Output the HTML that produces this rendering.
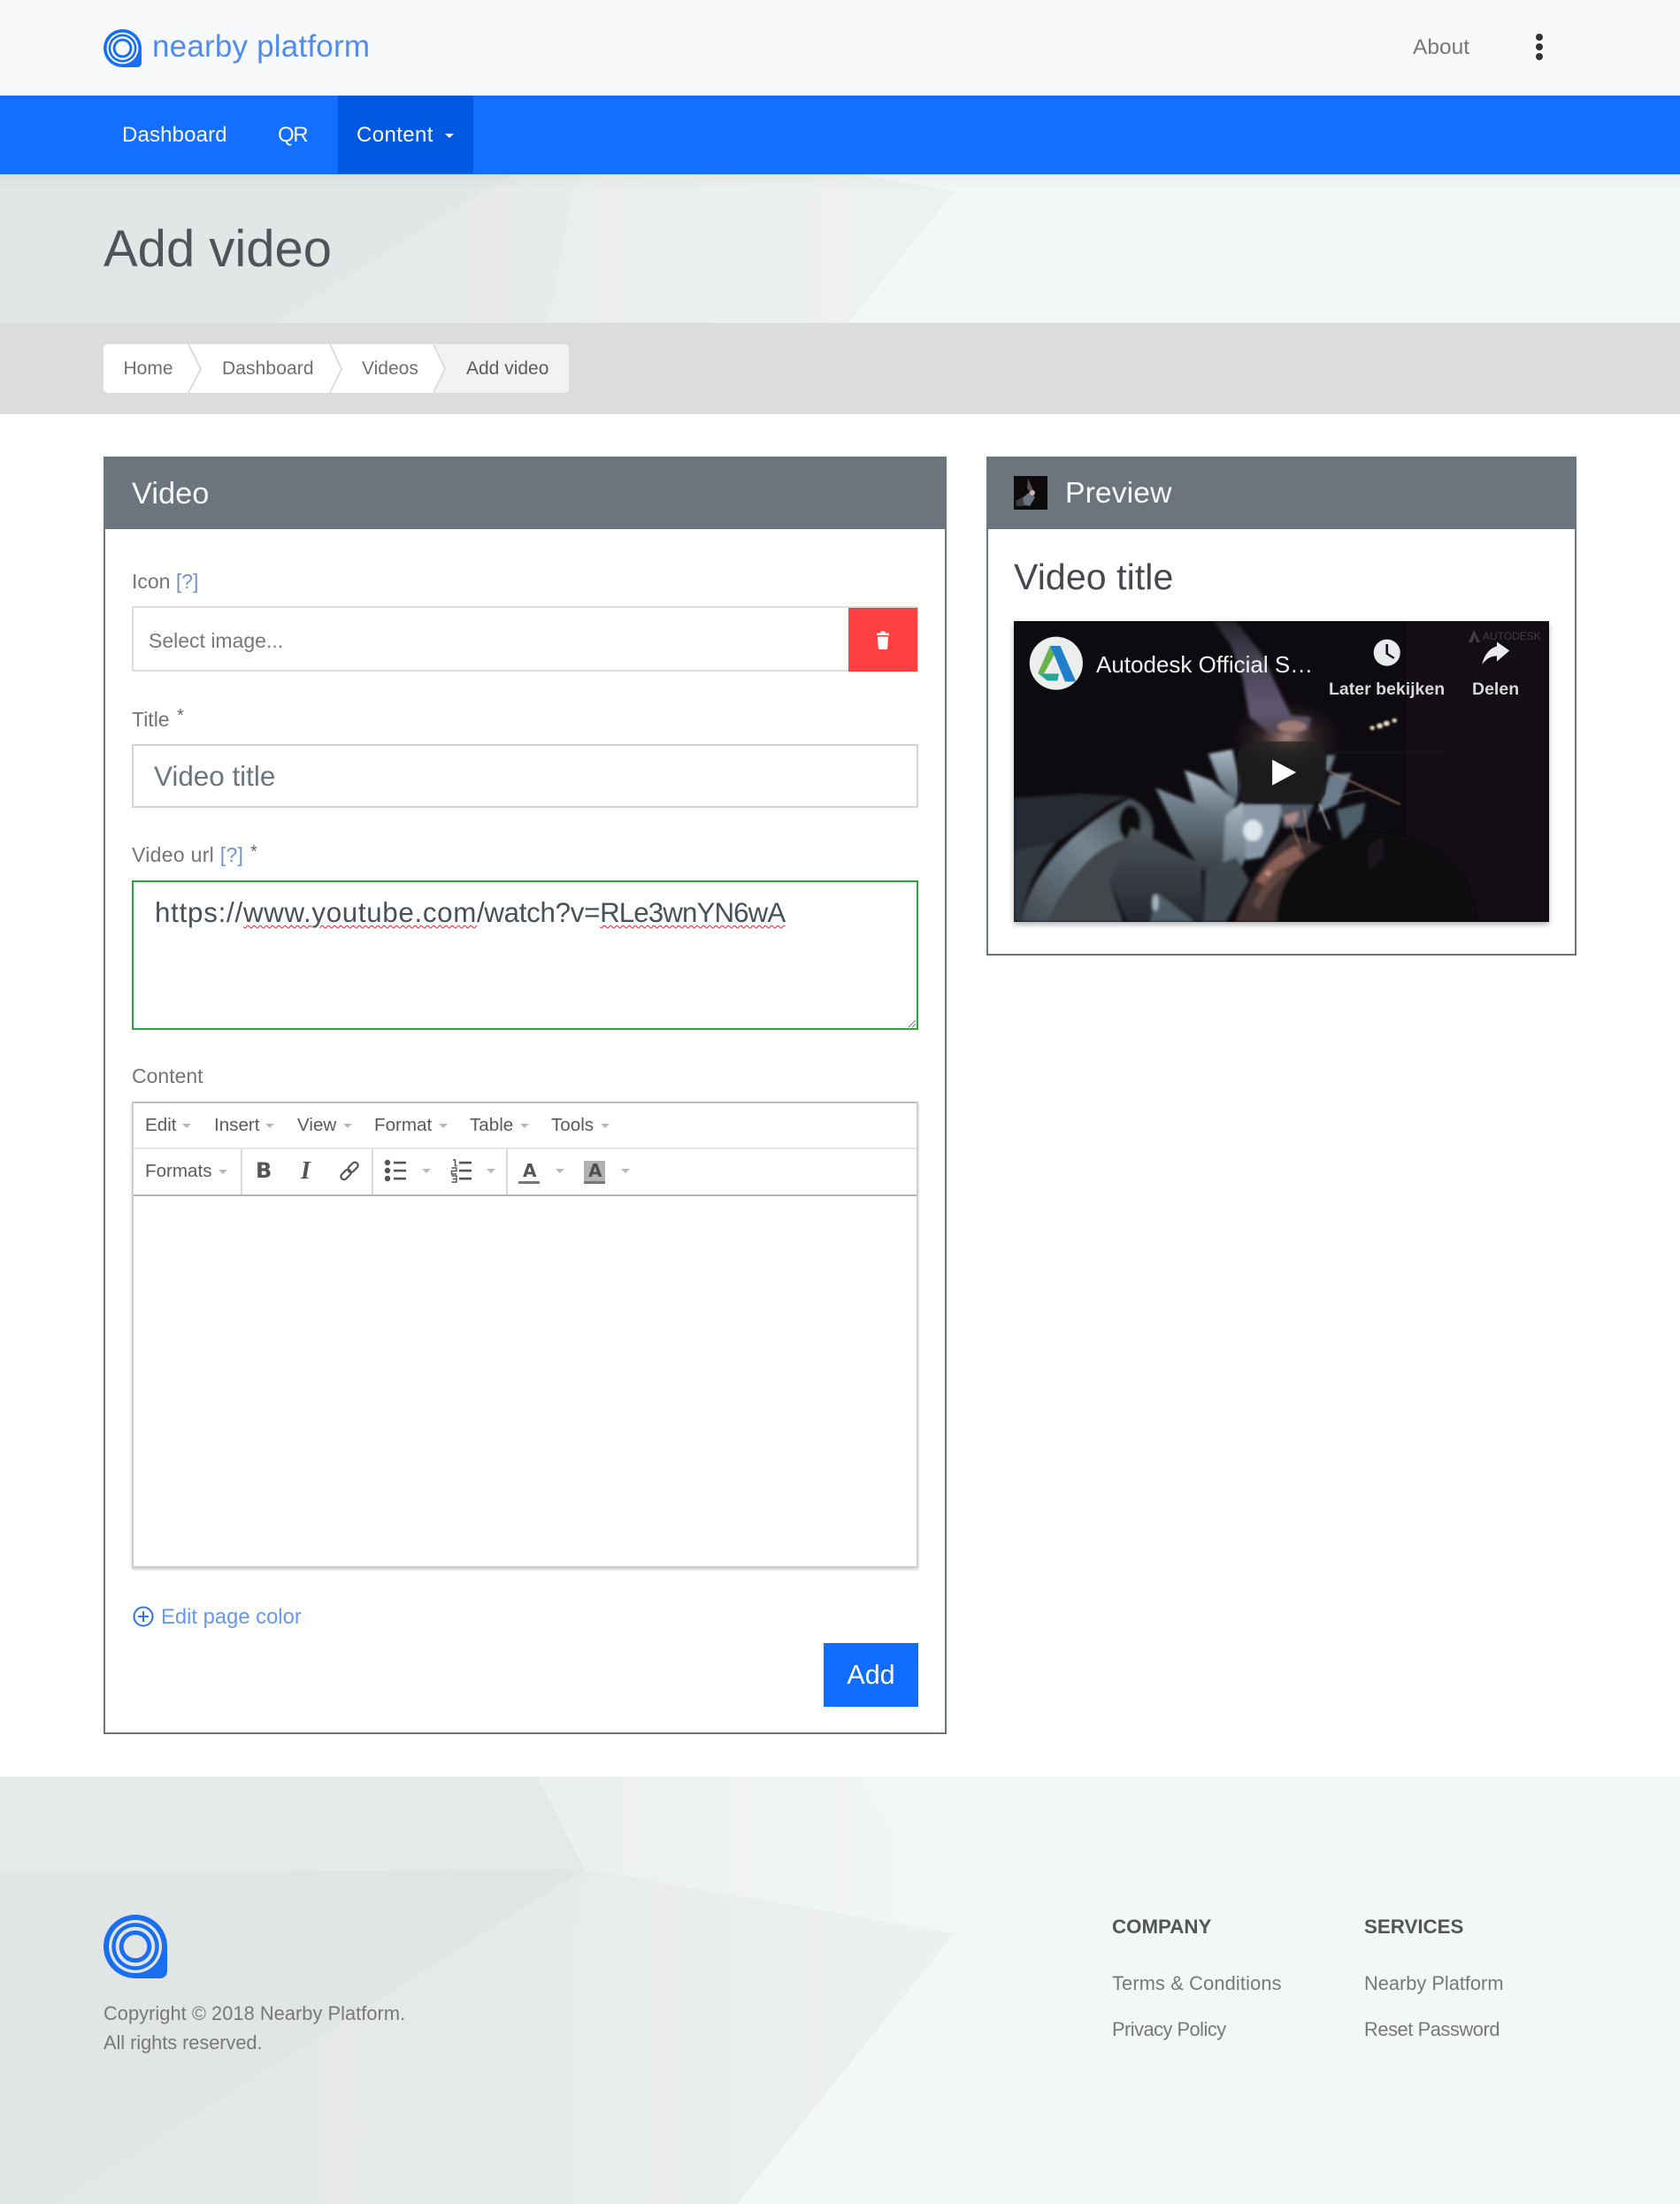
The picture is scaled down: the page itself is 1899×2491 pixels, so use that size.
<!DOCTYPE html>
<html lang="en"><head><meta charset="utf-8"><title>Add video</title>
<style>
html,body{margin:0;padding:0;background:#fff}
#p{position:relative;width:1899px;height:2491px;overflow:hidden;font-family:"Liberation Sans",Arial,sans-serif;color:#666;background:#fff}
.a{position:absolute}
.t{position:absolute;white-space:nowrap;line-height:1}
.l{font-size:23px;color:#747474}
.b{color:#6e96cc}
.m{font-size:20.6px;color:#5a5a5a}
.f{font-size:21.8px;color:#787878}
.fh{font-size:22.3px;font-weight:bold;color:#555}
.c{position:absolute;width:0;height:0;border-left:5px solid transparent;border-right:5px solid transparent;border-top:5px solid #b8b8b8}
.n{font-size:24px;color:#f4f8ff}
.w{text-decoration:underline wavy #e0242c 1px;text-underline-offset:3px}
svg{display:block}
</style></head><body><div id="p">

<!-- header -->
<div class="a" style="left:0;top:0;width:1899px;height:108px;background:#f7f9fb"></div>
<svg class="a" style="left:117px;top:33px" width="43" height="43" viewBox="0 0 72 72"><path d="M36 0A36 36 0 0 0 36 72H64A8 8 0 0 0 72 64V36A36 36 0 0 0 36 0Z" fill="#1a6ff0"/><circle cx="36" cy="36" r="30" fill="#f7f9fb"/><circle cx="36" cy="36" r="26.7" fill="#1a6ff0"/><circle cx="36" cy="36" r="22.3" fill="#f7f9fb"/><circle cx="36" cy="36" r="18.3" fill="#1a6ff0"/><circle cx="36" cy="36" r="13.3" fill="#f7f9fb"/></svg>
<div class="t" style="left:172px;top:35px;font-size:35px;color:#4f8cf0;letter-spacing:.2px">nearby platform</div>
<div class="t" style="left:1597px;top:42px;font-size:24.5px;color:#777">About</div>
<div class="a" style="left:1736px;top:38px;width:8px;height:8px;border-radius:50%;background:#333"></div>
<div class="a" style="left:1736px;top:49px;width:8px;height:8px;border-radius:50%;background:#333"></div>
<div class="a" style="left:1736px;top:60px;width:8px;height:8px;border-radius:50%;background:#333"></div>

<!-- nav -->
<div class="a" style="left:0;top:108px;width:1899px;height:89px;background:#146eff"></div>
<div class="a" style="left:382px;top:108px;width:153px;height:88px;background:#0058e0"></div>
<div class="t n" style="left:138px;top:141px;letter-spacing:.15px">Dashboard</div>
<div class="t n" style="left:314px;top:141px;letter-spacing:-1.4px">QR</div>
<div class="t n" style="left:403px;top:141px;letter-spacing:.4px">Content</div>
<div class="c" style="left:503px;top:151px;border-top-color:#fff"></div>

<!-- hero -->
<svg class="a" style="left:0;top:197px" width="1899" height="168" viewBox="0 2166 1899 168" preserveAspectRatio="none">
<defs>
<linearGradient id="hm" gradientUnits="userSpaceOnUse" x1="620" y1="0" x2="1000" y2="0"><stop offset="0" stop-color="#ebeeef"/><stop offset="1" stop-color="#eef1f2"/></linearGradient>
<linearGradient id="hl" gradientUnits="userSpaceOnUse" x1="100" y1="0" x2="640" y2="0"><stop offset="0" stop-color="#e5e8e9"/><stop offset="1" stop-color="#e8ebec"/></linearGradient>
</defs>
<rect x="0" y="2008" width="1899" height="483" fill="#f4f7f8"/>
<polygon points="661,2113 1079,2185 833,2491 591,2491" fill="url(#hm)"/>
<polygon points="0,2115 661,2113 63,2491 0,2491" fill="#e3e6e7"/>
<polygon points="661,2113 591,2491 63,2491" fill="url(#hl)"/>
</svg>
<div class="a" style="left:0;top:197px;width:1899px;height:18px;background:linear-gradient(rgba(0,0,0,.035),rgba(0,0,0,0))"></div>
<div class="t" style="left:117px;top:253px;font-size:58px;color:#50545a">Add video</div>

<!-- breadcrumb -->
<div class="a" style="left:0;top:365px;width:1899px;height:103px;background:#dcdcdc"></div>
<svg class="a" style="left:117px;top:389px" width="526" height="55" viewBox="117 389 526 55">
<rect x="117" y="389" width="526" height="55" rx="5" fill="#fff"/>
<path d="M490 389H638A5 5 0 0 1 643 394V439A5 5 0 0 1 638 444H490L503 417Z" fill="#f0f2f3"/>
<path d="M213 389L227 417L213 444M373 389L386 417L373 444M490 389L503 417L490 444" fill="none" stroke="#dcdcdc" stroke-width="2"/>
</svg>
<div class="t" style="left:139.5px;top:406px;font-size:21px;color:#6e6e6e">Home</div>
<div class="t" style="left:251px;top:406px;font-size:21px;color:#6e6e6e;letter-spacing:.1px">Dashboard</div>
<div class="t" style="left:409px;top:406px;font-size:21px;color:#6e6e6e">Videos</div>
<div class="t" style="left:527px;top:406px;font-size:21px;color:#5c5c5c">Add video</div>

<!-- video panel -->
<div class="a" style="left:117px;top:516px;width:949px;height:1440px;border:2px solid #6c757d"></div>
<div class="a" style="left:117px;top:516px;width:953px;height:82px;background:#6c757d"></div>
<div class="t" style="left:149px;top:541px;font-size:34.4px;color:#f6f7f8">Video</div>

<div class="t l" style="left:149px;top:646px">Icon <span class="b">[?]</span></div>
<div class="a" style="left:149px;top:685px;width:885px;height:70px;border:2px solid #dedede"></div>
<div class="a" style="left:959px;top:687px;width:78px;height:72px;background:#ff4040"></div>
<svg class="a" style="left:988px;top:711px" width="20" height="24" viewBox="0 0 20 24"><path d="M3 4.5H7.5V2.5H12.5V4.5H17V7H3Z M4 8.5H16L15.2 21.5A1.8 1.8 0 0 1 13.4 23H6.6A1.8 1.8 0 0 1 4.8 21.5Z" fill="#fff"/></svg>
<div class="t" style="left:168px;top:713px;font-size:23px;color:#787878">Select image...</div>

<div class="t l" style="left:149px;top:802px">Title</div>
<div class="t" style="left:200px;top:799px;font-size:20px;color:#666">*</div>
<div class="a" style="left:149px;top:841px;width:885px;height:68px;border:2px solid #d4d4d4"></div>
<div class="t" style="left:174px;top:862px;font-size:31.4px;color:#6c757d">Video title</div>

<div class="t l" style="left:149px;top:955px;letter-spacing:.3px">Video url <span class="b">[?]</span></div>
<div class="t" style="left:283px;top:953px;font-size:20px;color:#666">*</div>
<div class="a" style="left:149px;top:995px;width:885px;height:165px;border:2px solid #28a745"></div>
<div class="t" style="left:175px;top:1016px;font-size:31.3px;color:#495057"><span style="letter-spacing:.75px">https://</span><span class="w" style="letter-spacing:.67px">www.youtube.com</span><span style="letter-spacing:-.3px">/watch?v=</span><span class="w" style="letter-spacing:-.9px">RLe3wnYN6wA</span></div>
<svg class="a" style="left:1026px;top:1152px" width="10" height="10"><path d="M1 9L9 1M5 9L9 5" stroke="#777" stroke-width="1"/></svg>

<div class="t l" style="left:149px;top:1205px">Content</div>

<!-- editor -->
<div class="a" style="left:149px;top:1245px;width:885px;height:523px;background:#fff;border:2px solid #cfcfcf;border-top-color:#bdbdbd;box-shadow:0 2px 3px rgba(0,0,0,.2)"></div>
<div class="a" style="left:151px;top:1297px;width:885px;height:2px;background:#e6e6e6"></div>
<div class="a" style="left:151px;top:1350px;width:885px;height:2px;background:#b5b5b5"></div>
<div class="a" style="left:272px;top:1299px;width:2px;height:51px;background:#d8d8d8"></div>
<div class="a" style="left:420px;top:1299px;width:2px;height:51px;background:#d8d8d8"></div>
<div class="a" style="left:572px;top:1299px;width:2px;height:51px;background:#d8d8d8"></div>

<div class="t m" style="left:164px;top:1262px">Edit</div><div class="c" style="left:206px;top:1270px"></div>
<div class="t m" style="left:242px;top:1262px">Insert</div><div class="c" style="left:300px;top:1270px"></div>
<div class="t m" style="left:336px;top:1262px">View</div><div class="c" style="left:388px;top:1270px"></div>
<div class="t m" style="left:423px;top:1262px">Format</div><div class="c" style="left:496px;top:1270px"></div>
<div class="t m" style="left:531px;top:1262px">Table</div><div class="c" style="left:588px;top:1270px"></div>
<div class="t m" style="left:623px;top:1262px">Tools</div><div class="c" style="left:679px;top:1270px"></div>

<div class="t m" style="left:164px;top:1314px">Formats</div><div class="c" style="left:247px;top:1322px"></div>
<div class="t" style="left:289px;top:1311px;font-family:'DejaVu Sans',sans-serif;font-weight:bold;font-size:24px;color:#555">B</div>
<div class="t" style="left:340px;top:1310px;font-family:'Liberation Serif',serif;font-weight:bold;font-style:italic;font-size:28px;color:#555">I</div>
<svg class="a" style="left:382px;top:1311px" width="26" height="25" viewBox="0 0 26 25" fill="none" stroke="#555" stroke-width="2.2"><rect x="13.5" y="1.8" width="7" height="13" rx="3.4" transform="rotate(45 17 8.3)"/><rect x="5.5" y="10" width="7" height="13" rx="3.4" transform="rotate(45 9 16.5)"/></svg>

<svg class="a" style="left:434px;top:1310px" width="28" height="28" fill="#555"><circle cx="4" cy="4" r="3.2"/><circle cx="4" cy="13" r="3.2"/><circle cx="4" cy="22" r="3.2"/><rect x="11" y="2.8" width="14" height="2.6"/><rect x="11" y="11.8" width="14" height="2.6"/><rect x="11" y="20.8" width="14" height="2.6"/></svg>
<div class="c" style="left:477px;top:1321px"></div>
<svg class="a" style="left:508px;top:1310px" width="28" height="28" fill="#555"><rect x="11" y="2.8" width="14" height="2.6"/><rect x="11" y="11.8" width="14" height="2.6"/><rect x="11" y="20.8" width="14" height="2.6"/><path d="M4 1H6.5V7.5H8.5" fill="none" stroke="#555" stroke-width="1.5"/><path d="M2.5 10H8V13.5H2.5V17H8" fill="none" stroke="#555" stroke-width="1.4"/><path d="M2.5 19H8V26H2.5M3.5 22.5H8" fill="none" stroke="#555" stroke-width="1.4"/></svg>
<div class="c" style="left:550px;top:1321px"></div>
<div class="t" style="left:591px;top:1313px;font-family:'DejaVu Sans',sans-serif;font-weight:bold;font-size:20px;color:#555">A</div>
<div class="a" style="left:586px;top:1335px;width:24px;height:3px;background:#777"></div>
<div class="c" style="left:628px;top:1321px"></div>
<div class="a" style="left:660px;top:1312px;width:24px;height:25px;background:#b2b2b6"></div>
<div class="t" style="left:665px;top:1313px;font-family:'DejaVu Sans',sans-serif;font-weight:bold;font-size:20px;color:#505050">A</div>
<div class="a" style="left:660px;top:1335px;width:24px;height:3px;background:#777"></div>
<div class="c" style="left:702px;top:1321px"></div>

<svg class="a" style="left:150px;top:1815px" width="24" height="24" viewBox="0 0 24 24" fill="none" stroke="#2f72e8" stroke-width="2"><circle cx="12" cy="12" r="10.5"/><path d="M12 6V18M6 12H18"/></svg>
<div class="t" style="left:182px;top:1816px;font-size:23.8px;color:#6698ef">Edit page color</div>
<div class="a" style="left:931px;top:1857px;width:107px;height:72px;background:#116dff"></div>
<div class="t" style="left:931px;width:107px;text-align:center;top:1878px;font-size:30.5px;color:#fff">Add</div>

<!-- preview panel -->
<div class="a" style="left:1115px;top:516px;width:663px;height:560px;border:2px solid #6c757d"></div>
<div class="a" style="left:1115px;top:516px;width:667px;height:82px;background:#6c757d"></div>
<svg class="a" style="left:1146px;top:538px" width="38" height="38" viewBox="0 0 38 38"><rect width="38" height="38" fill="#0c0a0d"/><path d="M16 3L22 16L20 22L15 13Z" fill="#5f4f5a"/><path d="M8 26L18 18L24 24L18 34L8 32Z" fill="#6a727d"/><circle cx="21" cy="19" r="3" fill="#c9b6b2"/><path d="M2 28L10 24L12 34L3 34Z" fill="#3c4046"/></svg>
<div class="t" style="left:1204px;top:541px;font-size:33.7px;color:#f6f7f8;letter-spacing:.1px">Preview</div>
<div class="t" style="left:1146px;top:632px;font-size:41px;color:#45494f;letter-spacing:.1px">Video title</div>

<!-- video thumb -->
<div class="a" style="left:1146px;top:702px;width:605px;height:340px;box-shadow:0 3px 6px rgba(0,0,0,.3);background:#0e0b10;overflow:hidden">
<svg width="605" height="340" viewBox="0 0 1568 1020" preserveAspectRatio="none">
<defs>
<filter id="bl" x="-5%" y="-5%" width="110%" height="110%"><feGaussianBlur stdDeviation="4.5"/></filter>
<filter id="bl2" x="-30%" y="-30%" width="160%" height="160%"><feGaussianBlur stdDeviation="3"/></filter>
<linearGradient id="nz" x1="0" y1="0" x2="0" y2="1"><stop offset="0" stop-color="#25232a"/><stop offset=".4" stop-color="#4a4558"/><stop offset=".8" stop-color="#5e5670"/><stop offset="1" stop-color="#504650"/></linearGradient>
<radialGradient id="gl"><stop offset="0" stop-color="#e0b4a8" stop-opacity=".75"/><stop offset=".45" stop-color="#80605f" stop-opacity=".3"/><stop offset="1" stop-color="#3a2c34" stop-opacity="0"/></radialGradient>
<linearGradient id="rg" x1="0" y1="1" x2="1" y2="0"><stop offset="0" stop-color="#3f474e"/><stop offset=".55" stop-color="#74848f"/><stop offset="1" stop-color="#3a4047"/></linearGradient>
<linearGradient id="bd" x1="0" y1="0" x2="0" y2="1"><stop offset="0" stop-color="#7c8d9a"/><stop offset="1" stop-color="#2c3237"/></linearGradient>
<linearGradient id="bd2" x1="0" y1="0" x2="0" y2="1"><stop offset="0" stop-color="#4c545c"/><stop offset="1" stop-color="#24282c"/></linearGradient>
<linearGradient id="bd3" x1="0" y1="0" x2="0" y2="1"><stop offset="0" stop-color="#a8b8c4"/><stop offset="1" stop-color="#4a5862"/></linearGradient>
</defs>
<rect width="1568" height="1020" fill="#0e0b10"/>
<rect x="1150" y="0" width="418" height="1020" fill="#120e14"/>
<g filter="url(#bl)">
<ellipse cx="800" cy="395" rx="170" ry="130" fill="url(#gl)"/>
<polygon points="585,0 650,0 725,110 812,320 870,325 866,368 840,380 750,380 690,325 670,190 635,80" fill="url(#nz)"/>
<ellipse cx="815" cy="358" rx="42" ry="20" fill="#a07a74"/>
<!-- left ring -->
<polygon points="0,600 200,585 340,595 280,620 200,690 140,740 0,780" fill="#262b30"/>
<path d="M340,600 Q425,640 405,745 Q200,740 100,1020 L20,1020 Q60,780 340,600Z" fill="url(#rg)"/>
<path d="M345,735 Q200,760 100,1020 L320,1020 L280,880Z" fill="#43474c"/>
<path d="M0,780 L130,745 Q40,860 20,1020 L0,1020Z" fill="#33393f"/>
<ellipse cx="340" cy="685" rx="32" ry="60" fill="#0c0a0e"/>
<!-- blades -->
<polygon points="570,450 640,435 665,560 650,620 600,540" fill="url(#bd3)"/>
<polygon points="500,505 580,540 650,610 625,720 540,650" fill="url(#bd3)"/>
<polygon points="415,565 620,660 645,800 610,890 540,830 480,720" fill="url(#bd)"/>
<polygon points="620,660 670,610 680,800 640,910 610,880" fill="url(#bd3)"/>
<polygon points="345,700 550,825 555,1020 330,1020 280,880" fill="url(#bd2)"/>
<polygon points="560,850 650,800 690,880 620,1020 555,1020" fill="#3d464e"/>
<polygon points="670,620 790,620 775,700 730,800 680,810" fill="#8a9aa8"/>
<ellipse cx="700" cy="710" rx="28" ry="36" fill="#dfe6ec"/>
<polygon points="915,455 942,455 925,510 912,505" fill="#6f808c"/>
<polygon points="925,520 990,515 950,620 890,650" fill="#6a7d8c"/>
<polygon points="945,640 1030,615 1020,680 965,745" fill="#4e5e6a"/>
<polygon points="780,620 880,620 850,700 790,700" fill="#4f5863"/>
<polygon points="790,660 835,645 830,680 800,690" fill="#a88888"/>
<!-- copper arc -->
<path d="M650,1020 Q690,850 815,720 L920,770 Q800,850 770,1020Z" fill="#3f3230"/>
<path d="M710,880 Q760,790 830,760 L850,800 Q780,840 740,900Z" fill="#8a5e54"/>
<path d="M700,960 Q730,880 790,830 L800,860 Q750,900 720,980Z" fill="#5e4640"/>
<circle cx="745" cy="855" r="8" fill="#d29a86"/>
<!-- dark gear -->
<circle cx="1060" cy="1010" r="290" fill="#0d0a0e"/>
<polygon points="1040,760 1080,730 1085,800 1040,850" fill="#1a171d"/>
<!-- faint -->
<path d="M940,445H1260" stroke="#25242a" stroke-width="4"/>
<polygon points="530,1020 420,920 400,1020" fill="#4e5b66"/>
<ellipse cx="415" cy="955" rx="9" ry="28" fill="#a9b8c4"/>
</g>
<g fill="none" stroke-linecap="round" filter="url(#bl2)">
<path d="M925,510 L1130,620" stroke="#b88772" stroke-width="4"/>
<path d="M895,620 L925,705" stroke="#cfcccc" stroke-width="3.5"/>
<path d="M850,640 L866,750" stroke="#bb9484" stroke-width="3"/>
<path d="M810,680 L840,770" stroke="#a98072" stroke-width="3"/>
<path d="M950,595 Q990,575 1030,575" stroke="#8b8c90" stroke-width="3"/>
</g>
<g fill="#f0e2c8" filter="url(#bl2)"><circle cx="1050" cy="362" r="7"/><circle cx="1072" cy="355" r="9"/><circle cx="1092" cy="347" r="9"/><circle cx="1115" cy="337" r="7"/></g>
<!-- play -->
<rect x="655" y="408" width="260" height="210" rx="48" fill="#212121" opacity=".72"/>
<polygon points="757,470 827,513 757,557" fill="#fff"/>
<!-- logo -->
<ellipse cx="124" cy="143" rx="78" ry="90" fill="#eceeee"/>
<polygon points="106,84 136,84 182,205 150,205 118,115" fill="#1f7fc8"/>
<polygon points="106,84 118,115 88,178 70,178" fill="#6bb24a"/>
<polygon points="72,178 132,178 128,202 98,202" fill="#23a79a"/>
<!-- clock -->
<ellipse cx="1093" cy="107" rx="39" ry="45" fill="#e8eaec"/>
<path d="M1093,78 L1093,110 L1114,126" fill="none" stroke="#17151a" stroke-width="7"/>
<!-- share -->
<path d="M1452,100 L1415,70 L1415,85 C1385,95 1375,130 1372,147 C1385,125 1400,118 1415,118 L1415,137Z" fill="#e8eaec"/>
<!-- autodesk mark -->
<path d="M1348,30 L1332,72 H1343 L1350,50 L1356,72 H1366Z" fill="#3f3f44"/>
</svg>
<div class="t" style="left:93px;top:36px;font-size:26px;color:#f2f2f2">Autodesk Official S…</div>
<div class="t" style="left:356px;top:68px;font-size:19.5px;font-weight:bold;color:#d8d8d8">Later bekijken</div>
<div class="t" style="left:518px;top:68px;font-size:19.5px;font-weight:bold;color:#d8d8d8">Delen</div>
<div class="t" style="left:530px;top:11px;font-size:12px;color:#3f3f44">AUTODESK</div>
</div>

<!-- footer -->
<svg class="a" style="left:0;top:2008px" width="1899" height="483" viewBox="0 2008 1899 483" preserveAspectRatio="none">
<defs>
<linearGradient id="ft" gradientUnits="userSpaceOnUse" x1="620" y1="0" x2="1050" y2="0"><stop offset="0" stop-color="#ecefF0"/><stop offset="1" stop-color="#f3f6f7"/></linearGradient>
<linearGradient id="fm" gradientUnits="userSpaceOnUse" x1="620" y1="0" x2="1050" y2="0"><stop offset="0" stop-color="#e8ebec"/><stop offset="1" stop-color="#edf0f1"/></linearGradient>
<linearGradient id="fl" gradientUnits="userSpaceOnUse" x1="150" y1="0" x2="620" y2="0"><stop offset="0" stop-color="#e4e7e8"/><stop offset="1" stop-color="#e7eaeb"/></linearGradient>
</defs>
<rect x="0" y="2008" width="1899" height="483" fill="#f4f7f8"/>
<polygon points="607,2008 974,2008 1079,2185 661,2113" fill="url(#ft)"/>
<polygon points="661,2113 1079,2185 833,2491 591,2491" fill="url(#fm)"/>
<polygon points="0,2008 607,2008 661,2113 0,2115" fill="#e6e9ea"/>
<polygon points="0,2115 661,2113 63,2491 0,2491" fill="#e2e5e6"/>
<polygon points="661,2113 591,2491 63,2491" fill="url(#fl)"/>
</svg>
<svg class="a" style="left:117px;top:2164px" width="72" height="72" viewBox="0 0 72 72"><path d="M36 0A36 36 0 0 0 36 72H64A8 8 0 0 0 72 64V36A36 36 0 0 0 36 0Z" fill="#1a6ff0"/><circle cx="36" cy="36" r="30" fill="#e2e5e6"/><circle cx="36" cy="36" r="26.7" fill="#1a6ff0"/><circle cx="36" cy="36" r="22.3" fill="#e2e5e6"/><circle cx="36" cy="36" r="18.3" fill="#1a6ff0"/><circle cx="36" cy="36" r="13.3" fill="#e2e5e6"/></svg>
<div class="t f" style="left:117px;top:2265px;letter-spacing:.05px">Copyright © 2018 Nearby Platform.</div>
<div class="t f" style="left:117px;top:2298px;letter-spacing:-.05px">All rights reserved.</div>
<div class="t fh" style="left:1257px;top:2167px">COMPANY</div>
<div class="t fh" style="left:1542px;top:2167px">SERVICES</div>
<div class="t f" style="left:1257px;top:2231px;letter-spacing:.15px">Terms &amp; Conditions</div>
<div class="t f" style="left:1257px;top:2283px;letter-spacing:-.5px">Privacy Policy</div>
<div class="t f" style="left:1542px;top:2231px">Nearby Platform</div>
<div class="t f" style="left:1542px;top:2283px;letter-spacing:-.4px">Reset Password</div>

</div></body></html>
